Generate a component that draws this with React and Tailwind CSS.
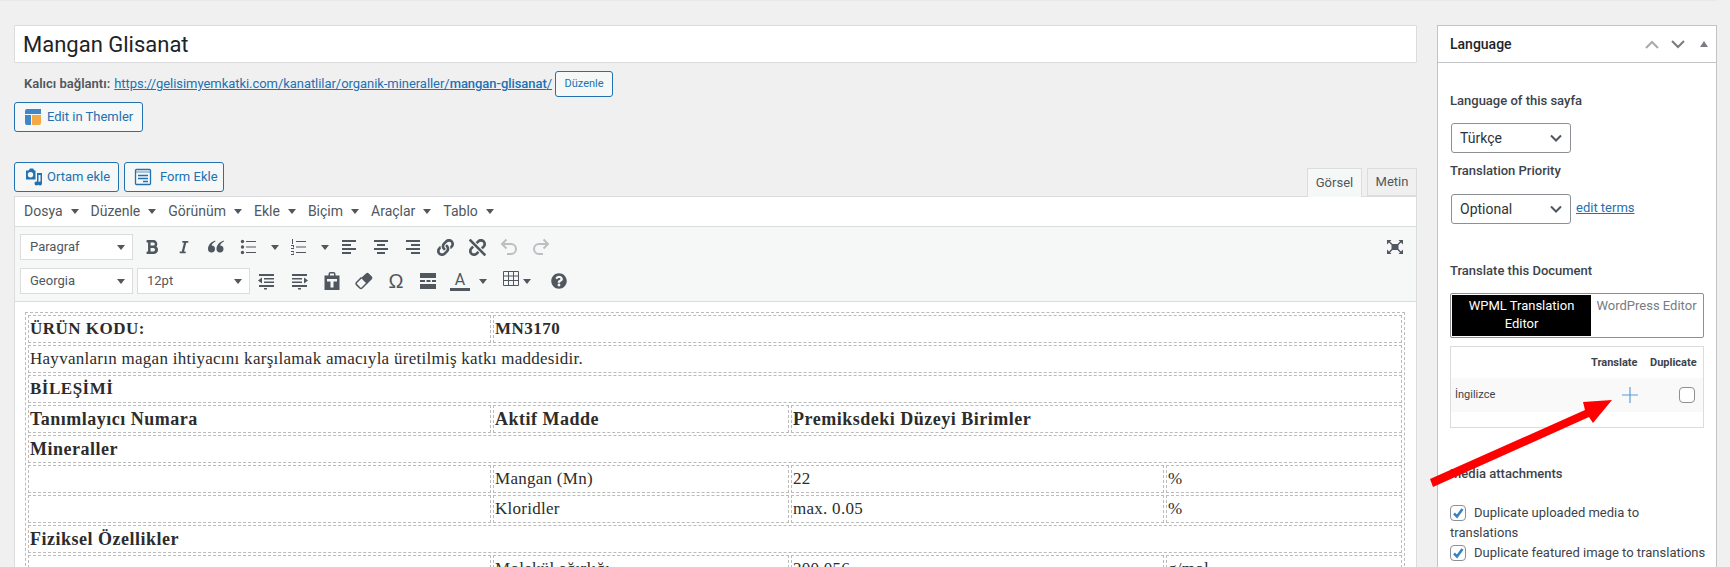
import { FaBold, FaItalic, FaLink, FaUnlink, FaQuestionCircle } from 'react-icons/fa'

const ui = { fontFamily: 'Roboto, sans-serif' }

function Caret({ className = '' }) {
  return <span className={`block w-0 h-0 border-x-[4px] border-x-transparent border-t-[5px] border-t-[#50575e] ${className}`} />
}

function Lines({ rows }) {
  return (
    <svg width="20" height="20" viewBox="0 0 20 20" fill="#50575e">
      {rows.map((r, i) => <rect key={i} x={r[0]} y={r[1]} width={r[2]} height={r[3] || 2} />)}
    </svg>
  )
}

const alignLeft = [[3, 3, 14], [3, 7, 9], [3, 11, 14], [3, 15, 9]]
const alignCenter = [[3, 3, 14], [6, 7, 8], [3, 11, 14], [6, 15, 8]]
const alignRight = [[3, 3, 14], [8, 7, 9], [3, 11, 14], [8, 15, 9]]

function BulletList() {
  return (
    <svg width="20" height="20" viewBox="0 0 20 20" fill="#50575e">
      <circle cx="4.500" cy="4.500" r="1.700" /><circle cx="4.500" cy="10" r="1.700" /><circle cx="4.500" cy="15.500" r="1.700" />
      <rect x="8" y="4" width="10" height="1" /><rect x="8" y="9.500" width="10" height="1" /><rect x="8" y="15" width="10" height="1" />
    </svg>
  )
}

function NumberList() {
  return (
    <svg width="20" height="20" viewBox="0 0 20 20" fill="#50575e">
      <rect x="4" y="2" width="1" height="5" /><rect x="3" y="8" width="3" height="1" /><rect x="5" y="9" width="1" height="1.500" /><rect x="3" y="11" width="3" height="1" />
      <rect x="3" y="14" width="3" height="1" /><rect x="5" y="15.500" width="1" height="1" /><rect x="3" y="17" width="3" height="1" />
      <rect x="8" y="4" width="10" height="1" /><rect x="8" y="9.500" width="10" height="1" /><rect x="8" y="15" width="10" height="1" />
    </svg>
  )
}

function Outdent() {
  return (
    <svg width="20" height="20" viewBox="0 0 20 20" fill="#50575e">
      <rect x="3" y="3" width="15" height="2" /><rect x="8" y="7" width="10" height="1.500" /><rect x="8" y="10.500" width="10" height="1.500" /><rect x="3" y="14" width="15" height="2" /><rect x="8" y="17" width="3" height="1.500" />
      <polygon points="2,9.500 6,6.500 6,12.500" />
    </svg>
  )
}

function Indent() {
  return (
    <svg width="20" height="20" viewBox="0 0 20 20" fill="#50575e">
      <rect x="2" y="3" width="15" height="2" /><rect x="2" y="7" width="10" height="1.500" /><rect x="2" y="10.500" width="10" height="1.500" /><rect x="2" y="14" width="15" height="2" /><rect x="8" y="17" width="3" height="1.500" />
      <polygon points="18,9.500 14,6.500 14,12.500" />
    </svg>
  )
}

function Paste() {
  return (
    <svg width="20" height="20" viewBox="0 0 20 20">
      <path fill="#50575e" d="M2.500 4.500h4V3a2 2 0 0 1 2-2h3a2 2 0 0 1 2 2v1.500h4V19h-15z" />
      <rect x="8" y="2.500" width="4" height="2" fill="#f6f7f7" />
      <path fill="#f6f7f7" d="M5 8h10v2.500h-3.500V16.500h-3V10.500H5z" />
    </svg>
  )
}

function Blockquote() {
  return (
    <svg width="20" height="20" viewBox="0 0 20 20" fill="#50575e">
      <path d="M9 3.500C5 5 2 8 2 12a3.500 3.500 0 1 0 3.600-3.500C6 6.800 7.500 5.500 9.500 4.600zM17.500 3.500c-4 1.500-7 4.500-7 8.500a3.500 3.500 0 1 0 3.600-3.500c.4-1.700 1.900-3 3.900-3.900z" />
    </svg>
  )
}

function Eraser() {
  return (
    <svg width="20" height="20" viewBox="0 0 20 20">
      <path fill="#50575e" d="M12 2.500a2 2 0 0 1 2.800 0l3 3a2 2 0 0 1 0 2.800L13 13 7 7z" />
      <path fill="none" stroke="#50575e" strokeWidth="1.500" d="M7.500 6.500L2.500 11.500a1.500 1.500 0 0 0 0 2.100l3.400 3.400a1.500 1.500 0 0 0 2.100 0l5-5" />
    </svg>
  )
}

function Undo({ flip }) {
  return (
    <svg width="20" height="20" viewBox="0 0 20 20" fill="none" stroke="#bcbfc1" strokeWidth="2" className={flip ? '-scale-x-100' : ''}>
      <path d="M3.500 7h8.500a5 5 0 0 1 0 10H8" />
      <path d="M7.500 2.500L3 7l4.500 4.500" />
    </svg>
  )
}

function HrIcon() {
  return (
    <svg width="20" height="20" viewBox="0 0 20 20" fill="#50575e">
      <rect x="2" y="2" width="16" height="5" /><rect x="2" y="9" width="5" height="2" /><rect x="8.500" y="9" width="4" height="2" /><rect x="14" y="9" width="4" height="2" /><rect x="2" y="13" width="16" height="5" />
    </svg>
  )
}

function TableIcon() {
  return (
    <svg width="18" height="18" viewBox="0 0 18 18" fill="none" stroke="#50575e" strokeWidth="1">
      <path d="M1.500 1.500h15v14h-15zM1.500 6h15M1.500 10.500h15M6.500 1.500v14M11.500 1.500v14" />
    </svg>
  )
}

function Fullscreen() {
  return (
    <svg width="18" height="16" viewBox="0 0 18 16" fill="#50575e">
      <rect x="5.500" y="5" width="7" height="6" />
      <path d="M1 1h4.500L4 2.500 6.500 5 5.500 6 3 3.500 1 5.500zM17 1h-4.500L14 2.500 11.500 5l1 1L15 3.500l2 2zM1 15h4.500L4 13.500 6.500 11l-1-1L3 12.500l-2-2zM17 15h-4.500l1.500-1.500L11.500 11l1-1 2.500 2.500 2-2z" />
    </svg>
  )
}

function ThemlerLogo() {
  return (
    <svg width="16" height="16" viewBox="0 0 16 16">
      <path fill="#3f87c9" d="M2 0h14v5H0V2a2 2 0 0 1 2-2zM0 6h6v10H2a2 2 0 0 1-2-2z" />
      <path fill="#f5a945" d="M7 6h9v8a2 2 0 0 1-2 2H7z" />
    </svg>
  )
}

function MediaIcon() {
  return (
    <svg width="20" height="20" viewBox="0 0 20 20" fill="#2271b1">
      <path d="M2 3.500h2.500L6 1.500h3l1.500 2h1v9H2zM6.500 5a2.700 2.700 0 1 0 0 5.400 2.700 2.700 0 0 0 0-5.400z" />
      <path d="M13 6h5v10.500a2 2 0 1 1-1.500-1.900V8h-2v8.500a2 2 0 1 1-4 0 2 2 0 0 1 2.500-1.900z" />
    </svg>
  )
}

function FormIcon() {
  return (
    <svg width="18" height="18" viewBox="0 0 18 18" fill="none" stroke="#2271b1" strokeWidth="1.300">
      <rect x="1.500" y="1.500" width="15" height="15" rx="1" />
      <path d="M1.500 4h15" strokeDasharray="1 1" />
      <path d="M4 7.500h10M4 10.500h10M9 13.500h5" strokeWidth="1.500" />
    </svg>
  )
}

function OutlineButton({ children, className = '' }) {
  return (
    <div className={`flex items-center border border-[#2271b1] rounded-[3px] bg-[#f6f7f7] text-[#2271b1] ${className}`}>
      {children}
    </div>
  )
}

function Btn({ children, className = 'w-[32px]' }) {
  return <div className={`h-[26px] flex items-center justify-center shrink-0 ${className}`}>{children}</div>
}

function Split({ icon, className = 'w-[51px]', iconClass = 'ml-[7px]', caretClass = 'ml-[13px]' }) {
  return (
    <div className={`h-[26px] flex items-center shrink-0 ${className}`}>
      <span className={iconClass}>{icon}</span>
      <Caret className={caretClass} />
    </div>
  )
}

function FormatSelect({ label, className = '' }) {
  return (
    <div className={`h-[26px] w-[113px] bg-white border border-[#dcdcde] flex items-center justify-between pl-[9px] pr-[7px] text-[13px] text-[#50575e] shrink-0 ${className}`}>
      {label}
      <Caret />
    </div>
  )
}

const cell = 'border border-dashed border-[#bbbbbb] h-[28px] p-0 pl-[1px] align-middle whitespace-nowrap'
const boldUpper = `${cell} font-bold tracking-[0.5px]`
const boldLower = `${cell} font-bold text-[18px] tracking-[0.5px]`

function EditorTable() {
  return (
    <table
      className="border-separate border-spacing-[2px] border border-dashed border-[#bbbbbb] table-fixed w-[1380px] text-[#2c2c2c] text-[17px] leading-[26px] tracking-[0.27px]"
      style={{ fontFamily: '"Liberation Serif", serif' }}
    >
      <colgroup>
        <col className="w-[463px]" /><col className="w-[296px]" /><col className="w-[373px]" /><col />
      </colgroup>
      <tbody>
        <tr><td className={boldUpper}>ÜRÜN KODU:</td><td colSpan={3} className={boldUpper}>MN3170</td></tr>
        <tr><td colSpan={4} className={cell}>Hayvanların magan ihtiyacını karşılamak amacıyla üretilmiş katkı maddesidir.</td></tr>
        <tr><td colSpan={4} className={boldUpper}>BİLEŞİMİ</td></tr>
        <tr>
          <td className={boldLower}>Tanımlayıcı Numara</td>
          <td className={boldLower}>Aktif Madde</td>
          <td colSpan={2} className={boldLower}>Premiksdeki Düzeyi Birimler</td>
        </tr>
        <tr><td colSpan={4} className={boldLower}>Mineraller</td></tr>
        <tr><td className={cell}></td><td className={cell}>Mangan (Mn)</td><td className={cell}>22</td><td className={cell}>%</td></tr>
        <tr><td className={cell}></td><td className={cell}>Kloridler</td><td className={cell}>max. 0.05</td><td className={cell}>%</td></tr>
        <tr><td colSpan={4} className={boldLower}>Fiziksel Özellikler</td></tr>
        <tr><td className={cell}></td><td className={cell}>Molekül ağırlığı</td><td className={cell}>200.056</td><td className={cell}>g/mol</td></tr>
      </tbody>
    </table>
  )
}

function Editor() {
  return (
    <div className="border border-[#dcdcde] border-b-0 flex-1 flex flex-col bg-white min-h-0 overflow-hidden">
      <div className="h-[30px] flex items-center gap-[12px] pl-[9px] text-[14px] text-[#50575e] border-b border-[#dcdcde] shrink-0">
        {['Dosya', 'Düzenle', 'Görünüm', 'Ekle', 'Biçim', 'Araçlar', 'Tablo'].map(m => (
          <div key={m} className="flex items-center gap-[8px]">
            {m}
            <Caret />
          </div>
        ))}
      </div>
      <div className="h-[75px] bg-[#f6f7f7] border-b border-[#dcdcde] shrink-0 pt-[7px] pl-[5px]">
        <div className="flex items-center">
          <FormatSelect label="Paragraf" />
          <div className="w-[2.500px]" />
          <Btn><FaBold size={16} color="#50575e" /></Btn>
          <Btn><FaItalic size={14} color="#50575e" /></Btn>
          <Btn><Blockquote /></Btn>
          <Split icon={<BulletList />} className="w-[50.500px]" iconClass="ml-[6px]" />
          <Split icon={<NumberList />} iconClass="ml-[6px]" />
          <Btn><Lines rows={alignLeft} /></Btn>
          <Btn><Lines rows={alignCenter} /></Btn>
          <Btn><Lines rows={alignRight} /></Btn>
          <Btn><FaLink size={17} color="#50575e" /></Btn>
          <Btn><FaUnlink size={17} color="#50575e" /></Btn>
          <Btn><Undo /></Btn>
          <Btn><Undo flip /></Btn>
          <div className="ml-auto mr-[12px]"><Fullscreen /></div>
        </div>
        <div className="flex items-center mt-[8px]">
          <FormatSelect label="Georgia" />
          <FormatSelect label="12pt" className="ml-[4px]" />
          <Btn><Outdent /></Btn>
          <Btn className="w-[32px] ml-[2px]"><Indent /></Btn>
          <Btn><Paste /></Btn>
          <Btn><Eraser /></Btn>
          <Btn><span className="text-[20px] font-medium text-[#50575e]" style={{ fontFamily: '"Liberation Sans", sans-serif' }}>Ω</span></Btn>
          <Btn><HrIcon /></Btn>
          <div className="h-[26px] w-[51px] flex items-center shrink-0">
            <span className="ml-[6px] w-[20px] flex flex-col items-center text-[#50575e]">
              <span className="text-[16px] leading-[17px]">A</span>
              <span className="block w-[20px] h-[3px] bg-[#50575e]" />
            </span>
            <Caret className="ml-[9px]" />
          </div>
          <div className="h-[26px] w-[48px] flex items-center shrink-0 -mt-[4px]">
            <span className="ml-[7px]"><TableIcon /></span>
            <Caret className="ml-[3px] mt-[4px]" />
          </div>
          <Btn><FaQuestionCircle size={16} color="#50575e" /></Btn>
        </div>
      </div>
      <div className="pt-[10px] pl-[10px]">
        <EditorTable />
      </div>
    </div>
  )
}

function MainColumn() {
  return (
    <div className="w-[1403px] ml-[14px] flex flex-col shrink-0">
      <div className="h-[38px] mt-[25px] bg-white border border-[#dcdcde] rounded-[1px] flex items-center pl-[8px] text-[22px] text-[#1d2327]">
        Mangan Glisanat
      </div>
      <div className="flex items-center h-[26px] mt-[8px] ml-[10px] text-[13px] text-[#50575e]">
        <span className="font-semibold">Kalıcı bağlantı:</span>
        <span className="ml-[4px] text-[#2271b1] underline tracking-[-0.05px]">
          https://gelisimyemkatki.com/kanatlilar/organik-mineraller/<span className="font-medium">mangan-glisanat</span>/
        </span>
        <OutlineButton className="ml-[3px] w-[58px] h-[26px] justify-center text-[11px]">Düzenle</OutlineButton>
      </div>
      <OutlineButton className="mt-[5px] w-[129px] h-[30px] pl-[10px] gap-[6px] text-[13px]">
        <ThemlerLogo />
        Edit in Themler
      </OutlineButton>
      <div className="flex items-end justify-between mt-[29px] h-[35px]">
        <div className="flex gap-[5px] mb-[4px]">
          <OutlineButton className="w-[105px] h-[30px] pl-[9px] gap-[3px] text-[13px]">
            <MediaIcon />
            Ortam ekle
          </OutlineButton>
          <OutlineButton className="w-[100px] h-[30px] pl-[9px] gap-[8px] text-[13px]">
            <FormIcon />
            Form Ekle
          </OutlineButton>
        </div>
        <div className="flex gap-[5px] text-[13px]">
          <div className="w-[55px] h-[29px] -mb-px bg-[#f6f7f7] border border-[#dcdcde] border-b-0 flex items-center justify-center text-[#50575e] relative z-10">Görsel</div>
          <div className="w-[50px] h-[28px] bg-[#f0f0f1] border border-[#dcdcde] flex items-center justify-center text-[#50575e]">Metin</div>
        </div>
      </div>
      <Editor />
    </div>
  )
}

function SideSelect({ label }) {
  return (
    <div className="w-[120px] h-[30px] bg-white border border-[#8c8f94] rounded-[3px] flex items-center justify-between pl-[8px] pr-[8px] text-[14px] text-[#2c3338] shrink-0">
      {label}
      <svg width="12" height="8" viewBox="0 0 12 8" fill="none" stroke="#50575e" strokeWidth="2"><path d="M1 1.500l5 5 5-5" /></svg>
    </div>
  )
}

function Check() {
  return (
    <span className="w-[16px] h-[16px] border border-[#8c8f94] rounded-[4px] bg-white inline-flex items-center justify-center shrink-0">
      <svg width="12" height="12" viewBox="0 0 12 12" fill="none" stroke="#3582c4" strokeWidth="2.500"><path d="M2 6.500l3 3L10.500 2" /></svg>
    </span>
  )
}

function Sidebar() {
  return (
    <div className="w-[280px] ml-[20px] mt-[25px] bg-white border border-[#c3c4c7] border-b-0 shrink-0 text-[13px] text-[#3c434a]">
      <div className="h-[37px] border-b border-[#c3c4c7] flex items-center pl-[12px] pr-[8px] text-[14px] font-medium text-[#1d2327]">
        <span className="flex-1">Language</span>
        <svg width="14" height="9" viewBox="0 0 14 9" fill="none" stroke="#a7aaad" strokeWidth="2"><path d="M1 8l6-6 6 6" /></svg>
        <svg width="14" height="9" viewBox="0 0 14 9" fill="none" stroke="#787c82" strokeWidth="2" className="ml-[12px]"><path d="M1 1l6 6 6-6" /></svg>
        <span className="ml-[15px] w-0 h-0 border-x-[4px] border-x-transparent border-b-[6px] border-b-[#787c82]" />
      </div>
      <div className="pl-[12px] pr-[12px]">
        <p className="mt-[29px] leading-[18px] font-medium">Language of this sayfa</p>
        <div className="mt-[13px] ml-[1px]"><SideSelect label="Türkçe" /></div>
        <p className="mt-[9px] leading-[18px] font-medium">Translation Priority</p>
        <div className="mt-[14px] ml-[1px] flex items-start">
          <SideSelect label="Optional" />
          <span className="ml-[5px] mt-[4px] text-[#2271b1] underline">edit terms</span>
        </div>
        <p className="mt-[38px] leading-[18px] font-medium">Translate this Document</p>
        <div className="mt-[13px] h-[45px] w-[254px] border border-[#8c8f94] rounded-[2px] p-[1px] flex">
          <div className="w-[139px] bg-black text-white text-center leading-[18px] pt-[2px] px-[10px]">WPML Translation Editor</div>
          <div className="flex-1 text-center text-[#787c82] leading-[18px] pt-[2px]">WordPress Editor</div>
        </div>
        <div className="mt-[8px] h-[82px] w-[254px] border border-[#dcdcde] pt-[31px] relative">
          <div className="absolute top-[8px] left-[140px] text-[11px] font-bold leading-[16px] flex">
            <span className="w-[59px]">Translate</span>
            <span>Duplicate</span>
          </div>
          <div className="h-[34px] bg-[#f9f9f9] flex items-center pl-[4px] text-[11px]">
            <span className="flex-1">İngilizce</span>
            <svg width="16" height="16" viewBox="0 0 16 16" stroke="#5b9dd9" strokeWidth="1.200" className="mr-[41px]"><path d="M8 0v16M0 8h16" /></svg>
            <span className="w-[16px] h-[16px] border border-[#8c8f94] rounded-[4px] bg-white mr-[8px]" />
          </div>
        </div>
        <p className="mt-[37px] leading-[18px] font-medium">Media attachments</p>
        <div className="mt-[20px] flex items-center gap-[8px] h-[20px] whitespace-nowrap"><Check />Duplicate uploaded media to</div>
        <p className="leading-[20px]">translations</p>
        <div className="flex items-center gap-[8px] h-[20px] whitespace-nowrap"><Check />Duplicate featured image to translations</div>
      </div>
    </div>
  )
}

function RedArrow() {
  return (
    <svg width="200" height="100" viewBox="0 0 200 100" className="absolute left-[1425px] top-[395px]">
      <polygon fill="#ff0000" points="5,84 160,15 158,7 187,5 168,28 164,22 8,92" />
    </svg>
  )
}

export default function App() {
  return (
    <div className="relative h-[567px] w-[1730px] overflow-hidden bg-[#f0f0f1] flex" style={ui}>
      <div className="absolute top-0 left-0 h-px w-[1717px] bg-[#e8e8e8]" />
      <MainColumn />
      <Sidebar />
      <RedArrow />
    </div>
  )
}
